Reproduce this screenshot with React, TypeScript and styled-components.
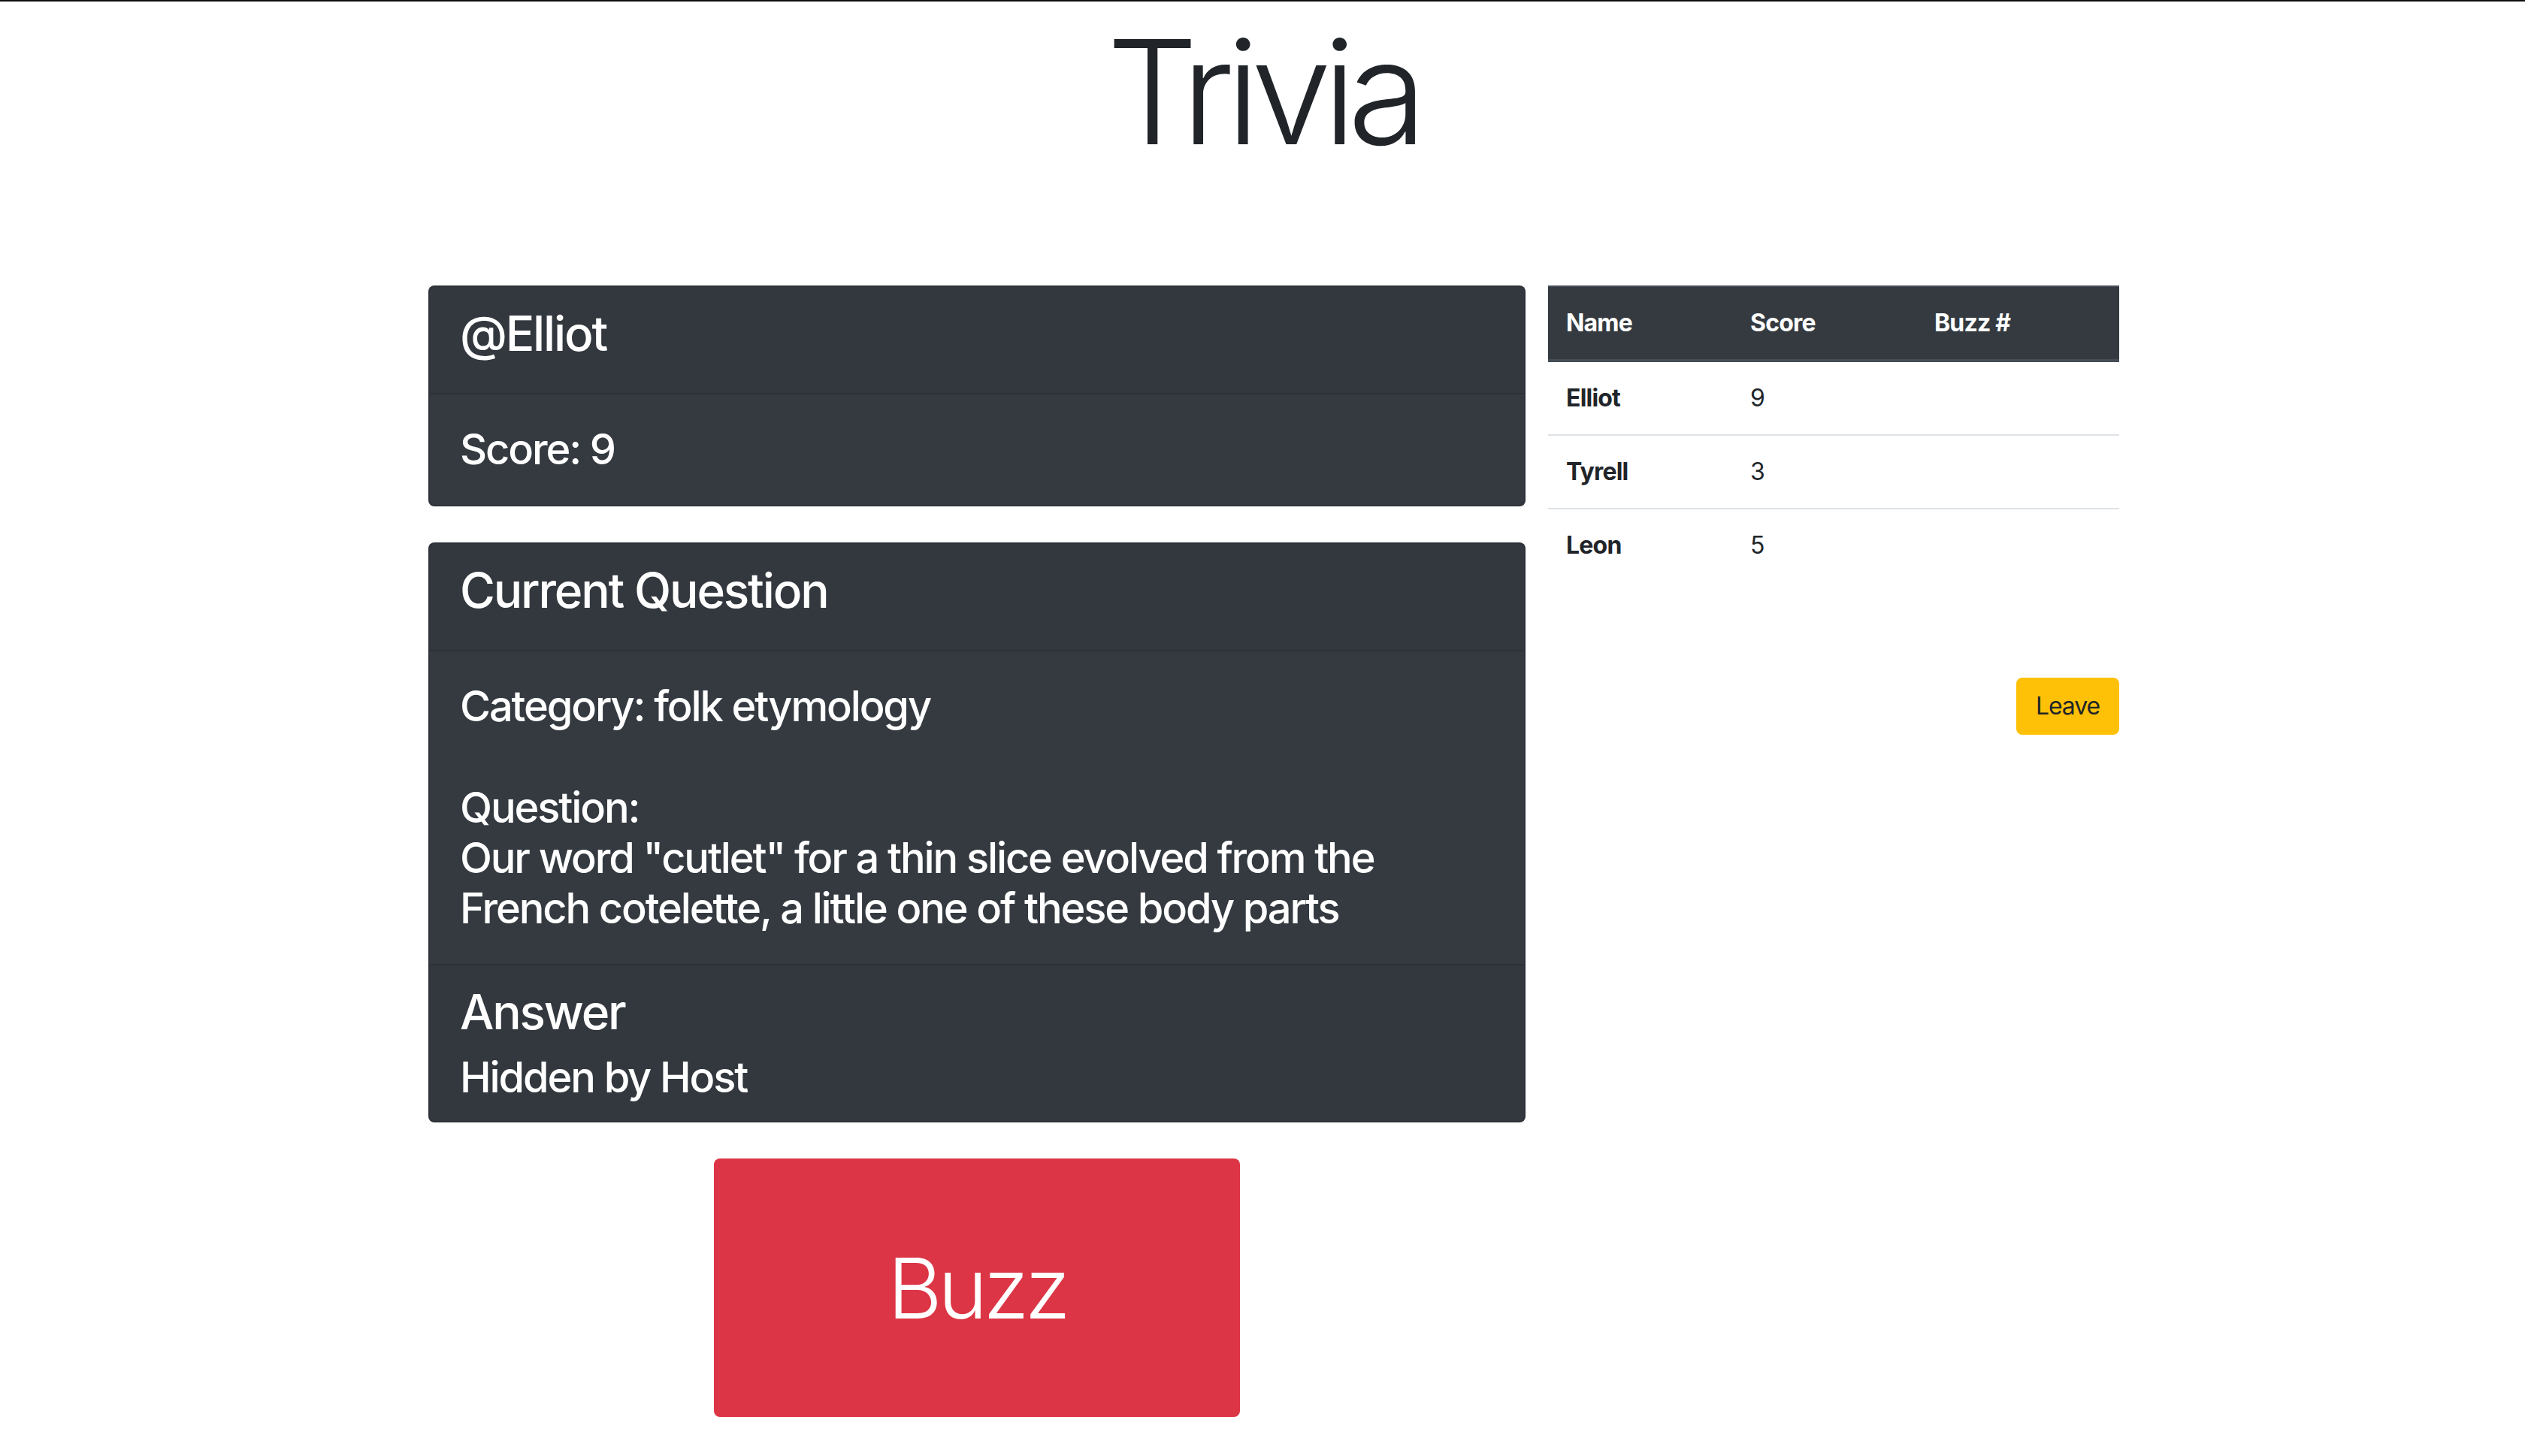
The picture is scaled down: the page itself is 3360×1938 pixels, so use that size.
import React from "react";
import styled, { createGlobalStyle } from "styled-components";

const GlobalStyle = createGlobalStyle`
  html, body {
    margin: 0;
    padding: 0;
    background: #ffffff;
  }
  body {
    border-top: 2px solid #0d0d0d;
    font-family: Inter, "Noto Sans", "Liberation Sans", sans-serif;
    color: #212529;
  }
  * { box-sizing: border-box; }
`;

const Container = styled.div`
  width: 2280px;
  margin: 0 auto;
  padding: 0 30px;
`;

const Title = styled.h1`
  margin: 5px 0 143px;
  text-align: center;
  font-size: 192px;
  font-weight: 300;
  line-height: 1.2;
  letter-spacing: -0.06em;
  color: #212529;
`;

const Row = styled.div`
  display: flex;
  margin: 0 -30px;
  align-items: flex-start;
`;

const MainCol = styled.div`
  width: 1520px;
  padding: 0 30px;
  display: flex;
  flex-direction: column;
  align-items: stretch;
`;

const SideCol = styled.div`
  width: 760px;
  display: flex;
  flex-direction: column;
`;

const Card = styled.section`
  background: #343a40;
  color: #ffffff;
  border: 2px solid rgba(0, 0, 0, 0.125);
  border-radius: 8px;
  margin-bottom: 48px;
  overflow: hidden;
`;

const CardHeader = styled.div`
  padding: 24px 40px;
  background: rgba(0, 0, 0, 0.03);
  border-bottom: 2px solid rgba(0, 0, 0, 0.125);
`;

const CardFooter = styled.div`
  padding: 24px 40px;
  background: rgba(0, 0, 0, 0.03);
  border-top: 2px solid rgba(0, 0, 0, 0.125);
`;

const CardBody = styled.div`
  padding: 40px;
`;

const Heading = styled.h2<{ $gap?: number }>`
  margin: 0 0 ${(p) => (p.$gap ?? 16)}px;
  font-size: 64px;
  font-weight: 500;
  line-height: 1.2;
  letter-spacing: -0.034em;
`;

const BodyText = styled.h3`
  margin: 0;
  font-size: 56px;
  font-weight: 500;
  line-height: 1.2;
  letter-spacing: -0.038em;
`;

const BuzzButton = styled.button`
  align-self: center;
  width: 700px;
  height: 344px;
  border: none;
  border-radius: 8px;
  background: #dc3545;
  color: #ffffff;
  font-family: Inter, "Noto Sans", "Liberation Sans", sans-serif;
  font-size: 112px;
  font-weight: 300;
  line-height: 1.2;
  letter-spacing: -0.05em;
  cursor: pointer;
`;

const Table = styled.table`
  width: 760px;
  border-collapse: collapse;
  font-size: 32px;
  line-height: 48px;
  letter-spacing: -0.025em;
  color: #212529;
`;

const HeadCell = styled.th<{ $w?: number }>`
  width: ${(p) => (p.$w ? `${p.$w}px` : "auto")};
  padding: 24px;
  text-align: left;
  font-weight: 700;
  background: #343a40;
  color: #ffffff;
  border-top: 2px solid #454d55;
  border-bottom: 4px solid #454d55;
`;

const RowHead = styled.th`
  padding: 24px;
  text-align: left;
  font-weight: 700;
  border-top: 2px solid #dee2e6;
`;

const Cell = styled.td`
  padding: 24px;
  border-top: 2px solid #dee2e6;
`;

const Actions = styled.div`
  display: flex;
  justify-content: flex-end;
  margin-top: 128px;
`;

const LeaveButton = styled.button`
  padding: 12px 24px;
  border: 2px solid #ffc107;
  border-radius: 8px;
  background: #ffc107;
  color: #212529;
  font-family: Inter, "Noto Sans", "Liberation Sans", sans-serif;
  font-size: 32px;
  font-weight: 400;
  line-height: 48px;
  letter-spacing: -0.035em;
  cursor: pointer;
`;

const players = [
  { name: "Elliot", score: 9, buzz: "" },
  { name: "Tyrell", score: 3, buzz: "" },
  { name: "Leon", score: 5, buzz: "" },
];

export default function App() {
  return (
    <>
      <GlobalStyle />
      <Container>
        <Title>Trivia</Title>
        <Row>
          <MainCol>
            <Card>
              <CardHeader>
                <Heading>@Elliot</Heading>
              </CardHeader>
              <CardBody>
                <BodyText>Score: 9</BodyText>
              </CardBody>
            </Card>
            <Card>
              <CardHeader>
                <Heading>Current Question</Heading>
              </CardHeader>
              <CardBody>
                <BodyText>
                  Category: folk etymology
                  <br />
                  <br />
                  Question:
                  <br />
                  Our word "cutlet" for a thin slice evolved from the French
                  cotelette, a little one of these body parts
                </BodyText>
              </CardBody>
              <CardFooter>
                <Heading $gap={15}>Answer</Heading>
                <BodyText>Hidden by Host</BodyText>
              </CardFooter>
            </Card>
            <BuzzButton>Buzz</BuzzButton>
          </MainCol>
          <SideCol>
            <Table>
              <thead>
                <tr>
                  <HeadCell $w={245}>Name</HeadCell>
                  <HeadCell $w={245}>Score</HeadCell>
                  <HeadCell>Buzz #</HeadCell>
                </tr>
              </thead>
              <tbody>
                {players.map((p) => (
                  <tr key={p.name}>
                    <RowHead scope="row">{p.name}</RowHead>
                    <Cell>{p.score}</Cell>
                    <Cell>{p.buzz}</Cell>
                  </tr>
                ))}
              </tbody>
            </Table>
            <Actions>
              <LeaveButton>Leave</LeaveButton>
            </Actions>
          </SideCol>
        </Row>
      </Container>
    </>
  );
}
